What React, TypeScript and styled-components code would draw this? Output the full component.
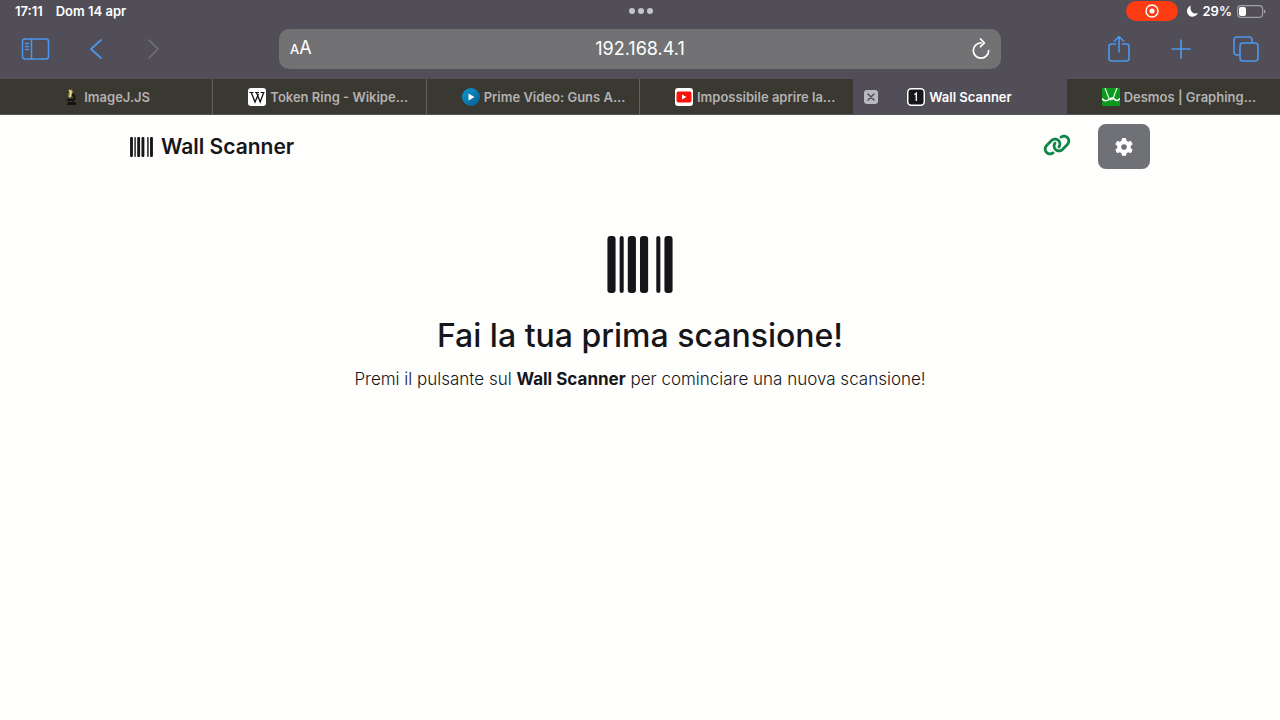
import React from "react";
import styled, { createGlobalStyle } from "styled-components";
import { FaGear, FaLink } from "react-icons/fa6";

const GlobalStyle = createGlobalStyle`
  * { box-sizing: border-box; }
  body {
    margin: 0;
    background: #fefefc;
    color: #16161a;
    font-family: Inter, "Liberation Sans", sans-serif;
  }
  button, input { font: inherit; color: inherit; }
  svg { display: block; flex: none; }
`;

const BrowserChrome = styled.div`
  background: #514e57;
  color: #ffffff;
`;

const StatusBar = styled.div`
  display: grid;
  grid-template-columns: 1fr auto 1fr;
  align-items: center;
  height: 22px;
  padding: 0 14px 0 15px;
  font-size: 13px;
  font-weight: 600;
  line-height: 16px;
`;

const StatusGroup = styled.div<{ $end?: boolean }>`
  display: flex;
  align-items: center;
  justify-content: ${(p) => (p.$end ? "flex-end" : "flex-start")};
  gap: ${(p) => (p.$end ? "5px" : "13px")};
`;

const Dots = styled.div`
  display: flex;
  gap: 3px;
`;

const Dot = styled.span`
  width: 6px;
  height: 6px;
  border-radius: 50%;
  background: #c5c4cb;
`;

const RecordPill = styled.span`
  display: flex;
  align-items: center;
  justify-content: center;
  width: 52px;
  height: 20px;
  margin-right: 4px;
  border-radius: 10px;
  background: #ff3b14;
`;

const Toolbar = styled.div`
  display: grid;
  grid-template-columns: 1fr minmax(0, 722px) 1fr;
  align-items: center;
  height: 57px;
  padding: 0 20px 4px;
`;

const ToolGroup = styled.div<{ $end?: boolean }>`
  display: flex;
  align-items: center;
  justify-content: ${(p) => (p.$end ? "flex-end" : "flex-start")};
  gap: ${(p) => (p.$end ? "38px" : "36px")};
`;

const ToolButton = styled.button`
  display: flex;
  align-items: center;
  justify-content: center;
  padding: 0;
  border: 0;
  background: none;
  color: #4b97ee;

  &:disabled {
    color: #75737c;
  }
`;

const AddressBar = styled.form`
  display: flex;
  align-items: center;
  height: 40px;
  padding: 0 11px;
  border-radius: 10px;
  background: #727274;
`;

const FieldButton = styled.button<{ $end?: boolean }>`
  display: flex;
  align-items: baseline;
  justify-content: ${(p) => (p.$end ? "flex-end" : "flex-start")};
  width: 24px;
  padding: 0;
  border: 0;
  background: none;
  font-size: 18px;
  line-height: 24px;

  small {
    font-size: 13px;
    font-weight: 500;
  }
`;

const AddressInput = styled.input`
  flex: 1;
  min-width: 0;
  padding: 0;
  border: 0;
  outline: 0;
  background: none;
  font-size: 18px;
  line-height: 24px;
  text-align: center;
`;

const TabStrip = styled.nav`
  display: grid;
  grid-template-columns: repeat(6, minmax(0, 1fr));
  height: 36px;
  border-bottom: 1px solid #55545a;
`;

const Tab = styled.div<{ $active?: boolean; $long?: boolean; $divided?: boolean }>`
  position: relative;
  display: flex;
  align-items: center;
  justify-content: ${(p) => (p.$long ? "flex-start" : "center")};
  padding-left: ${(p) => (p.$long ? "35px" : "0")};
  border-right: 1px solid ${(p) => (p.$divided ? "#62605f" : "transparent")};
  background: ${(p) => (p.$active ? "#514e57" : "#393831")};
  color: ${(p) => (p.$active ? "#ffffff" : "#b3b1b1")};
`;

const TabLink = styled.a`
  display: flex;
  align-items: center;
  gap: 4px;
  min-width: 0;
  color: inherit;
  font-size: 13px;
  font-weight: 600;
  line-height: 18px;
  text-decoration: none;
  white-space: nowrap;
`;

const CloseTab = styled.button`
  position: absolute;
  left: 11px;
  display: flex;
  align-items: center;
  justify-content: center;
  width: 14px;
  height: 14px;
  padding: 0;
  border: 0;
  border-radius: 3px;
  background: #b9b8be;
  color: #504e57;
`;

const SiteHeader = styled.header`
  display: flex;
  align-items: center;
  justify-content: space-between;
  width: 80%;
  max-width: 1020px;
  margin: 0 auto;
  padding: 9px 0;
`;

const Brand = styled.a`
  display: flex;
  align-items: center;
  gap: 8px;
  color: inherit;
  font-size: 21px;
  font-weight: 600;
  line-height: 32px;
  text-decoration: none;
`;

const HeaderActions = styled.div`
  display: flex;
  align-items: center;
  gap: 27px;
`;

const Connection = styled.span`
  padding-bottom: 4px;
  color: #108548;
`;

const SettingsButton = styled.button`
  display: flex;
  align-items: center;
  justify-content: center;
  width: 52px;
  height: 45px;
  border: 0;
  border-radius: 8px;
  background: #707176;
  color: #ffffff;
`;

const EmptyState = styled.main`
  display: flex;
  flex-direction: column;
  align-items: center;
  padding: 58px 16px;
  text-align: center;
`;

const Title = styled.h1`
  margin: 22px 0 8px;
  font-size: 32px;
  font-weight: 500;
  line-height: 42px;
`;

const Lead = styled.p`
  margin: 0;
  font-size: 17px;
  font-weight: 300;
  line-height: 28px;

  strong {
    font-weight: 700;
  }
`;

const stroke = { fill: "none", stroke: "currentColor", strokeLinecap: "round", strokeLinejoin: "round" } as const;

function Barcode({ width, height }: { width: number; height: number }) {
  const bars = [[0, 8], [12, 4], [20, 8], [32, 8], [48, 4], [56, 8]];
  return (
    <svg width={width} height={height} viewBox="0 0 64 56" fill="#16161a" aria-hidden="true">
      {bars.map(([x, w]) => (
        <rect key={x} x={x} width={w} height="56" rx={w === 8 ? 3 : 2} />
      ))}
    </svg>
  );
}

const MicroscopeIcon = () => (
  <svg width="18" height="18" viewBox="0 0 18 18">
    <path d="M7 3l3-2 1 4-2 5-3-1z" fill="#9a8748" />
    <path d="M7 2l2 2-1 5" stroke="#f4e391" strokeWidth="1.500" fill="none" />
    <path d="M10 6c4 2 3 6 0 7" stroke="#15130f" strokeWidth="2" fill="none" />
    <path d="M5 11h6v2H5zM6 14h8v3H5z" fill="#15130f" />
  </svg>
);

const WikipediaIcon = () => (
  <svg width="18" height="18" viewBox="0 0 18 18">
    <rect width="18" height="18" rx="3" fill="#fff" />
    <path d="M1.500 4.500h4M7 4.500h4M12.500 4.500h4" stroke="#111" strokeWidth="1" />
    <path d="M3.300 4.500L7 14l3.500-8M8.500 4.500L12.200 14l3.300-9" fill="none" stroke="#111" strokeWidth="1.300" />
  </svg>
);

const PrimeIcon = () => (
  <svg width="18" height="18" viewBox="0 0 18 18">
    <defs>
      <linearGradient id="prime" x1="0" y1="0" x2="1" y2="1">
        <stop offset="0" stopColor="#0a9ad6" />
        <stop offset="1" stopColor="#0a5a8c" />
      </linearGradient>
    </defs>
    <circle cx="9" cy="9" r="9" fill="url(#prime)" />
    <path d="M6.500 5.500L12.500 9l-6 3.500z" fill="#fff" />
  </svg>
);

const YoutubeIcon = () => (
  <svg width="18" height="18" viewBox="0 0 18 18">
    <rect width="18" height="18" rx="3" fill="#fff" />
    <rect x="1.500" y="3.500" width="15" height="11" rx="2" fill="#fb1208" />
    <path d="M7 6.500L11.500 9 7 11.500z" fill="#fff" />
  </svg>
);

const OneIcon = () => (
  <svg width="18" height="18" viewBox="0 0 18 18">
    <rect x="0.750" y="0.750" width="16.500" height="16.500" rx="3.500" fill="#17171a" stroke="#fff" strokeWidth="1.500" />
    <path d="M7.500 6.700L9.300 5.200V13" fill="none" stroke="#fff" strokeWidth="1.300" />
  </svg>
);

const DesmosIcon = () => (
  <svg width="18" height="18" viewBox="0 0 18 18">
    <rect width="18" height="18" rx="1" fill="#0b9a1c" />
    <path d="M3 0L7 10.500Q9 13.500 11 10.500L15 0" fill="none" stroke="#e9fbe9" strokeWidth="1.200" />
    <path d="M0 10.500C2.500 13.500 4.500 13.500 7 11.500s4-2 5.500-.3 3.500 1.800 5.500-.7" fill="none" stroke="#fff" strokeWidth="1.600" />
  </svg>
);

const tabs = [
  { label: "ImageJ.JS", icon: <MicroscopeIcon />, divided: true },
  { label: "Token Ring - Wikipe...", icon: <WikipediaIcon />, long: true, divided: true },
  { label: "Prime Video: Guns A...", icon: <PrimeIcon />, long: true, divided: true },
  { label: "Impossibile aprire la...", icon: <YoutubeIcon />, long: true },
  { label: "Wall Scanner", icon: <OneIcon />, active: true },
  { label: "Desmos | Graphing...", icon: <DesmosIcon />, long: true },
];

export default function App() {
  return (
    <>
      <GlobalStyle />
      <BrowserChrome>
        <StatusBar>
          <StatusGroup>
            <span>17:11</span>
            <span>Dom 14 apr</span>
          </StatusGroup>
          <Dots>
            <Dot />
            <Dot />
            <Dot />
          </Dots>
          <StatusGroup $end>
            <RecordPill>
              <svg width="14" height="14" viewBox="0 0 14 14">
                <circle cx="7" cy="7" r="6" fill="none" stroke="#fff" strokeWidth="1.500" />
                <circle cx="7" cy="7" r="2.500" fill="#fff" />
              </svg>
            </RecordPill>
            <svg width="11" height="12" viewBox="0 0 11 12">
              <path d="M3.800.8A5.600 5.600 0 1 0 10.800 8C7 9.800 2.200 6.500 3.800.8z" fill="#fff" />
            </svg>
            <span>29%</span>
            <svg width="29" height="13" viewBox="0 0 29 13">
              <rect x="0.600" y="0.600" width="25" height="11.800" rx="3.500" fill="none" stroke="#a19fa6" strokeWidth="1.200" />
              <rect x="2" y="2" width="7" height="9" rx="2" fill="#fff" />
              <path d="M27 4.500c2 .8 2 3.200 0 4z" fill="#a19fa6" />
            </svg>
          </StatusGroup>
        </StatusBar>
        <Toolbar>
          <ToolGroup>
            <ToolButton aria-label="Barra laterale">
              <svg width="30" height="22" viewBox="0 0 30 22" {...stroke} strokeWidth="1.500">
                <rect x="2.500" y="1" width="26" height="20" rx="2.500" />
                <path d="M11.500 1v20M5.500 5.500h3M5.500 8.500h3M5.500 11.500h3" />
              </svg>
            </ToolButton>
            <ToolButton aria-label="Indietro">
              <svg width="21" height="22" viewBox="0 0 21 22" {...stroke} strokeWidth="1.800">
                <path d="M15 2L5 11l10 9" />
              </svg>
            </ToolButton>
            <ToolButton aria-label="Avanti" disabled>
              <svg width="21" height="22" viewBox="0 0 21 22" {...stroke} strokeWidth="1.500">
                <path d="M6 2l9 9-9 9" />
              </svg>
            </ToolButton>
          </ToolGroup>
          <AddressBar onSubmit={(e) => e.preventDefault()}>
            <FieldButton type="button" aria-label="Dimensione testo">
              <small>A</small>A
            </FieldButton>
            <AddressInput aria-label="Indirizzo" defaultValue="192.168.4.1" />
            <FieldButton $end type="button" aria-label="Ricarica">
              <svg width="18" height="22" viewBox="0 0 18 22" {...stroke} strokeWidth="1.700">
                <path d="M9 4.800A7.700 7.700 0 1 0 16.700 12.500M8.500 1l3.800 3.800-3.800 3.800" />
              </svg>
            </FieldButton>
          </AddressBar>
          <ToolGroup $end>
            <ToolButton aria-label="Condividi">
              <svg width="24" height="28" viewBox="0 0 24 28" {...stroke} strokeWidth="1.600">
                <path d="M9.500 9H5.500Q3 9 3 11.500v12Q3 26 5.500 26h15q2.500 0 2.500-2.500v-12Q23 9 20.500 9h-4M13 17V2M8.500 6L13 1.500 17.500 6" />
              </svg>
            </ToolButton>
            <ToolButton aria-label="Nuova scheda">
              <svg width="26" height="22" viewBox="0 0 26 22" {...stroke} strokeWidth="1.700">
                <path d="M13 2v18M4 11h18" />
              </svg>
            </ToolButton>
            <ToolButton aria-label="Panoramica schede">
              <svg width="28" height="26" viewBox="0 0 28 26" {...stroke} strokeWidth="1.600">
                <rect x="8" y="7" width="18" height="18" rx="3" />
                <path d="M8 19H5q-3 0-3-3V4q0-3 3-3h12q3 0 3 3v3" />
              </svg>
            </ToolButton>
          </ToolGroup>
        </Toolbar>
        <TabStrip aria-label="Schede">
          {tabs.map((t) => (
            <Tab key={t.label} $active={t.active} $long={t.long} $divided={t.divided}>
              {t.active && (
                <CloseTab aria-label="Chiudi scheda">
                  <svg width="8" height="8" viewBox="0 0 8 8" {...stroke} strokeWidth="1.500">
                    <path d="M1 1l6 6M7 1L1 7" />
                  </svg>
                </CloseTab>
              )}
              <TabLink href="#">
                {t.icon}
                {t.label}
              </TabLink>
            </Tab>
          ))}
        </TabStrip>
      </BrowserChrome>
      <SiteHeader>
        <Brand href="#">
          <Barcode width={23} height={20} />
          Wall Scanner
        </Brand>
        <HeaderActions>
          <Connection>
            <FaLink size={28} />
          </Connection>
          <SettingsButton aria-label="Impostazioni">
            <FaGear size={18} />
          </SettingsButton>
        </HeaderActions>
      </SiteHeader>
      <EmptyState>
        <Barcode width={66} height={57} />
        <Title>Fai la tua prima scansione!</Title>
        <Lead>
          Premi il pulsante sul <strong>Wall Scanner</strong> per cominciare una nuova scansione!
        </Lead>
      </EmptyState>
    </>
  );
}
